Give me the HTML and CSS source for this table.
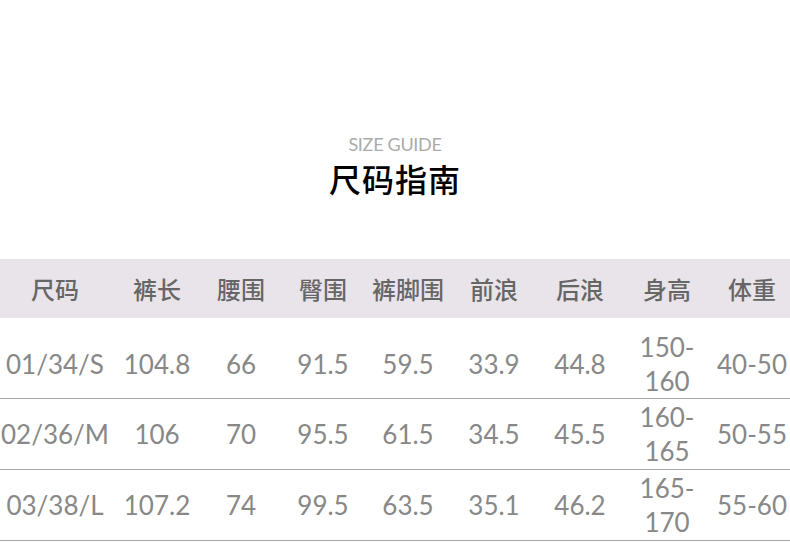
FILE: index.html
```html
<!DOCTYPE html>
<html lang="zh">
<head>
<meta charset="utf-8">
<link rel="stylesheet" href="styles.css">
</head>
<body>
<div class="page">
  <div class="heading">
    <div class="en">SIZE GUIDE</div>
    <div class="zh">尺码指南</div>
  </div>
  <table class="size-table">
    <colgroup>
      <col class="c1"><col class="c2"><col class="c3"><col class="c4"><col class="c5"><col class="c6"><col class="c7"><col class="c8"><col class="c9">
    </colgroup>
    <thead>
      <tr><th>尺码</th><th>裤长</th><th>腰围</th><th>臀围</th><th>裤脚围</th><th>前浪</th><th>后浪</th><th>身高</th><th>体重</th></tr>
    </thead>
    <tbody>
      <tr class="first"><td>01/34/S</td><td>104.8</td><td>66</td><td>91.5</td><td>59.5</td><td>33.9</td><td>44.8</td><td>150-<br>160</td><td>40-50</td></tr>
      <tr><td>02/36/M</td><td>106</td><td>70</td><td>95.5</td><td>61.5</td><td>34.5</td><td>45.5</td><td>160-<br>165</td><td>50-55</td></tr>
      <tr><td>03/38/L</td><td>107.2</td><td>74</td><td>99.5</td><td>63.5</td><td>35.1</td><td>46.2</td><td>165-<br>170</td><td>55-60</td></tr>
    </tbody>
  </table>
</div>
</body>
</html>
```
FILE: styles.css
```css
html, body {
  margin: 0;
  padding: 0;
  background: #ffffff;
}
.page {
  width: 790px;
  height: 542px;
  overflow: hidden;
}
.heading {
  padding-top: 133px;
  padding-bottom: 58px;
  text-align: center;
}
.en {
  font-family: "Lato", "Noto Sans", sans-serif;
  font-weight: 400;
  font-size: 18px;
  line-height: 22px;
  color: #ababab;
  letter-spacing: -0.3px;
}
.zh {
  font-family: "Noto Sans CJK SC", sans-serif;
  font-weight: 500;
  font-size: 32px;
  line-height: 46px;
  color: #000;
  letter-spacing: 1px;
}
.size-table {
  width: 790px;
  border-collapse: collapse;
  table-layout: fixed;
}
.c1 { width: 110px; }
.c2 { width: 94px; }
.c3 { width: 74px; }
.c4 { width: 90px; }
.c5 { width: 80px; }
.c6 { width: 92px; }
.c7 { width: 80px; }
.c8 { width: 94px; }
.c9 { width: 76px; }
.size-table th {
  background: #e8e4e9;
  height: 59px;
  padding: 0;
  font-family: "Noto Sans CJK SC", sans-serif;
  font-weight: 500;
  font-size: 24px;
  color: #666;
  text-align: center;
  vertical-align: middle;
}
.size-table td {
  padding: 0;
  height: 70px;
  border-bottom: 1px solid #a8a8a8;
  font-family: "Lato", "Noto Sans", sans-serif;
  font-size: 26px;
  line-height: 34px;
  color: #888;
  text-align: center;
  vertical-align: middle;
  white-space: nowrap;
}
.size-table tr.first td {
  height: 68px;
  padding-top: 12px;
}
```
